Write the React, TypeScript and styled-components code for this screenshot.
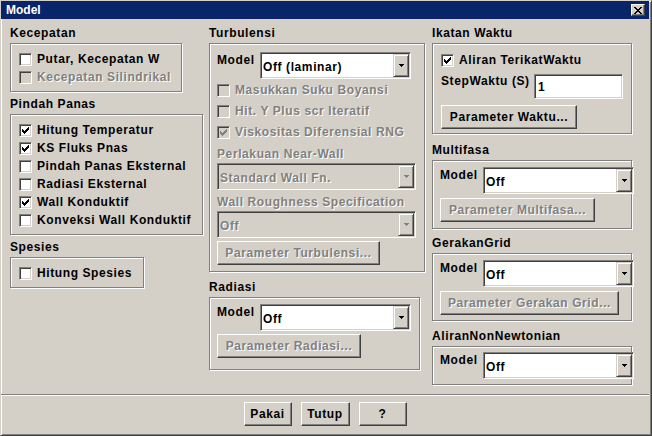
import React from "react";
import styled, { createGlobalStyle } from "styled-components";

const face = "#d4d0c8";
const shadow = "#808080";
const dark = "#404040";
const light = "#ffffff";

const GlobalStyle = createGlobalStyle`
  * { box-sizing: border-box; }
  body { margin: 0; background: ${face}; }
`;

const Window = styled.div`
  width: 652px;
  height: 436px;
  display: flex;
  flex-direction: column;
  background: ${face};
  border: 1px solid;
  border-color: ${face} ${dark} ${dark} ${face};
  box-shadow: inset 1px 1px ${light}, inset -1px -1px ${shadow};
  padding: 0 2px 0 0;
  font-family: "Liberation Sans", Arial, sans-serif;
  font-size: 12px;
  font-weight: bold;
  letter-spacing: 0.6px;
  line-height: 13px;
  color: #000;
`;

const TitleBar = styled.div`
  height: 18px;
  display: flex;
  align-items: center;
  padding-left: 5px;
  background: #0a246a;
  color: ${light};
  letter-spacing: 0;
`;

const CloseButton = styled.div`
  width: 14px;
  height: 12px;
  margin: 0 4px 0 auto;
  display: flex;
  align-items: center;
  justify-content: center;
  background: ${face};
  border: 1px solid;
  border-color: ${light} ${dark} ${dark} ${light};
  box-shadow: inset -1px -1px ${shadow};
`;

const Body = styled.div`
  padding: 8px 0 0 9px;
`;

const Columns = styled.div`
  display: flex;
  align-items: flex-start;
  gap: 6px;
`;

const Column = styled.div<{ $w: number }>`
  width: ${(p) => p.$w}px;
  display: flex;
  flex-direction: column;
`;

const Section = styled.div<{ $mt?: number }>`
  margin-top: ${(p) => p.$mt ?? 0}px;
`;

const Heading = styled.div`
  height: 13px;
  margin-bottom: 3px;
  white-space: nowrap;
`;

const Box = styled.div<{ $w: number; $pad: string }>`
  width: ${(p) => p.$w}px;
  padding: ${(p) => p.$pad};
  border: 1px solid ${shadow};
  box-shadow: inset 1px 1px ${light}, 1px 1px ${light};
`;

const Text = styled.span<{ $disabled?: boolean }>`
  white-space: nowrap;
  color: ${(p) => (p.$disabled ? shadow : "#000")};
  text-shadow: ${(p) => (p.$disabled ? `1px 1px ${light}` : "none")};
`;

const CheckRow = styled.div<{ $h: number }>`
  height: ${(p) => p.$h}px;
  display: flex;
  align-items: center;
  gap: 5px;
`;

const CheckSquare = styled.div<{ $disabled?: boolean }>`
  width: 13px;
  height: 13px;
  flex: none;
  padding: 2px;
  border: 1px solid;
  border-color: ${shadow} ${light} ${light} ${shadow};
  box-shadow: inset 1px 1px ${dark}, inset -1px -1px ${face};
  background: ${(p) => (p.$disabled ? face : light)};
  display: flex;
`;

const CheckList = styled.div<{ $mt?: number }>`
  margin-top: ${(p) => p.$mt ?? 0}px;
`;

const FieldRow = styled.div<{ $mt?: number }>`
  display: flex;
  align-items: flex-start;
  margin-top: ${(p) => p.$mt ?? 0}px;
`;

const FieldLabel = styled.div<{ $w: number; $pt: number }>`
  width: ${(p) => p.$w}px;
  padding-top: ${(p) => p.$pt}px;
  flex: none;
  white-space: nowrap;
`;

const CaptionText = styled(Text)<{ $mt: number }>`
  display: block;
  height: 13px;
  margin-top: ${(p) => p.$mt}px;
`;

const SelectFrame = styled.div<{ $w?: number; $disabled?: boolean; $mt?: number }>`
  width: ${(p) => (p.$w ? `${p.$w}px` : "100%")};
  height: 27px;
  flex: none;
  margin-top: ${(p) => p.$mt ?? 0}px;
  display: flex;
  border: 1px solid;
  border-color: ${shadow} ${light} ${light} ${shadow};
  box-shadow: inset 1px 1px ${dark}, inset -1px -1px ${face};
  background: ${(p) => (p.$disabled ? face : light)};
`;

const SelectValue = styled.div`
  flex: 1;
  display: flex;
  align-items: center;
  padding: 4px 0 0 2px;
  overflow: hidden;
`;

const DropButton = styled.div`
  width: 16px;
  margin: 1px 1px 1px 0;
  display: flex;
  align-items: center;
  justify-content: center;
  background: ${face};
  border: 1px solid;
  border-color: ${face} ${dark} ${dark} ${face};
  box-shadow: inset 1px 1px ${light}, inset -1px -1px ${shadow};
`;

const TextField = styled.div`
  width: 89px;
  height: 25px;
  display: flex;
  align-items: center;
  padding: 1px 0 0 3px;
  border: 1px solid;
  border-color: ${shadow} ${light} ${light} ${shadow};
  box-shadow: inset 1px 1px ${dark}, inset -1px -1px ${face};
  background: ${light};
`;

const Button = styled.div<{ $w: number; $mt?: number }>`
  width: ${(p) => p.$w}px;
  height: 24px;
  margin-top: ${(p) => p.$mt ?? 0}px;
  display: flex;
  align-items: center;
  justify-content: center;
  background: ${face};
  border: 1px solid;
  border-color: ${light} ${dark} ${dark} ${light};
  box-shadow: inset -1px -1px ${shadow};
`;

const Separator = styled.div`
  margin-top: 9px;
  border-top: 1px solid ${shadow};
  border-bottom: 1px solid ${light};
`;

const Footer = styled.div`
  display: flex;
  justify-content: center;
  gap: 9px;
  padding-top: 6px;
`;

const CheckMark = ({ color }: { color: string }) => (
  <svg width="7" height="7" viewBox="0 0 7 7" shapeRendering="crispEdges">
    {[2, 3, 4, 3, 2, 1, 0].map((y, x) => (
      <rect key={x} x={x} y={y} width="1" height="3" fill={color} />
    ))}
  </svg>
);

const Arrow = ({ color }: { color: string }) => (
  <svg width="5" height="3" viewBox="0 0 5 3" shapeRendering="crispEdges">
    <rect x="0" y="0" width="5" height="1" fill={color} />
    <rect x="1" y="1" width="3" height="1" fill={color} />
    <rect x="2" y="2" width="1" height="1" fill={color} />
  </svg>
);

const CloseX = () => (
  <svg width="8" height="7" viewBox="0 0 8 7" shapeRendering="crispEdges">
    {[0, 1, 2, 3, 4, 5, 6].map((i) => (
      <React.Fragment key={i}>
        <rect x={i} y={i} width="2" height="1" fill="#000" />
        <rect x={6 - i} y={i} width="2" height="1" fill="#000" />
      </React.Fragment>
    ))}
  </svg>
);

const Check = ({
  label,
  checked,
  disabled,
  h,
}: {
  label: string;
  checked?: boolean;
  disabled?: boolean;
  h: number;
}) => (
  <CheckRow $h={h}>
    <CheckSquare $disabled={disabled}>
      {checked && <CheckMark color={disabled ? shadow : "#000"} />}
    </CheckSquare>
    <Text $disabled={disabled}>{label}</Text>
  </CheckRow>
);

const Select = ({
  value,
  w,
  disabled,
  mt,
}: {
  value: string;
  w?: number;
  disabled?: boolean;
  mt?: number;
}) => (
  <SelectFrame $w={w} $disabled={disabled} $mt={mt}>
    <SelectValue>
      <Text $disabled={disabled}>{value}</Text>
    </SelectValue>
    <DropButton>
      <Arrow color={disabled ? shadow : "#000"} />
    </DropButton>
  </SelectFrame>
);

const ModelRow = ({ value }: { value: string }) => (
  <FieldRow>
    <FieldLabel $w={43} $pt={2}>
      Model
    </FieldLabel>
    <Select value={value} w={151} />
  </FieldRow>
);

const pindahPanas = [
  { label: "Hitung Temperatur", checked: true },
  { label: "KS Fluks Pnas", checked: true },
  { label: "Pindah Panas Eksternal" },
  { label: "Radiasi Eksternal" },
  { label: "Wall Konduktif", checked: true },
  { label: "Konveksi Wall Konduktif" },
];

const turbulensi = [
  { label: "Masukkan Suku Boyansi" },
  { label: "Hit. Y Plus scr Iteratif" },
  { label: "Viskositas Diferensial RNG", checked: true },
];

export default function App() {
  return (
    <>
      <GlobalStyle />
      <Window>
        <TitleBar>
          Model
          <CloseButton>
            <CloseX />
          </CloseButton>
        </TitleBar>
        <Body>
          <Columns>
            <Column $w={193}>
              <Section>
                <Heading>Kecepatan</Heading>
                <Box $w={172} $pad="6px 8px 5px 8px">
                  <Check h={18} label="Putar, Kecepatan W" />
                  <Check h={18} label="Kecepatan Silindrikal" disabled />
                </Box>
              </Section>
              <Section $mt={6}>
                <Heading>Pindah Panas</Heading>
                <Box $w={193} $pad="6px 8px 5px 8px">
                  {pindahPanas.map((r) => (
                    <Check key={r.label} h={18} label={r.label} checked={r.checked} />
                  ))}
                </Box>
              </Section>
              <Section $mt={6}>
                <Heading>Spesies</Heading>
                <Box $w={134} $pad="6px 8px 5px 8px">
                  <Check h={18} label="Hitung Spesies" />
                </Box>
              </Section>
            </Column>

            <Column $w={217}>
              <Section>
                <Heading>Turbulensi</Heading>
                <Box $w={216} $pad="8px 8px 6px 7px">
                  <ModelRow value="Off (laminar)" />
                  <CheckList $mt={1}>
                    {turbulensi.map((r) => (
                      <Check key={r.label} h={21} label={r.label} checked={r.checked} disabled />
                    ))}
                  </CheckList>
                  <CaptionText $disabled $mt={5}>
                    Perlakuan Near-Wall
                  </CaptionText>
                  <Select value="Standard Wall Fn." disabled mt={2} />
                  <CaptionText $disabled $mt={6}>
                    Wall Roughness Specification
                  </CaptionText>
                  <Select value="Off" disabled mt={2} />
                  <Button $w={163} $mt={3}>
                    <Text $disabled>Parameter Turbulensi...</Text>
                  </Button>
                </Box>
              </Section>
              <Section $mt={9}>
                <Heading>Radiasi</Heading>
                <Box $w={211} $pad="6px 8px 11px 7px">
                  <ModelRow value="Off" />
                  <Button $w={144} $mt={3}>
                    <Text $disabled>Parameter Radiasi...</Text>
                  </Button>
                </Box>
              </Section>
            </Column>

            <Column $w={200}>
              <Section>
                <Heading>Ikatan Waktu</Heading>
                <Box $w={200} $pad="6px 8px 4px 8px">
                  <Check h={21} label="Aliran TerikatWaktu" checked />
                  <FieldRow $mt={3}>
                    <FieldLabel $w={93} $pt={1}>
                      StepWaktu (S)
                    </FieldLabel>
                    <TextField>1</TextField>
                  </FieldRow>
                  <Button $w={136} $mt={6}>
                    Parameter Waktu...
                  </Button>
                </Box>
              </Section>
              <Section $mt={10}>
                <Heading>Multifasa</Heading>
                <Box $w={200} $pad="6px 0 6px 7px">
                  <ModelRow value="Off" />
                  <Button $w={155} $mt={4}>
                    <Text $disabled>Parameter Multifasa...</Text>
                  </Button>
                </Box>
              </Section>
              <Section $mt={8}>
                <Heading>GerakanGrid</Heading>
                <Box $w={200} $pad="6px 0 5px 7px">
                  <ModelRow value="Off" />
                  <Button $w={179} $mt={4}>
                    <Text $disabled>Parameter Gerakan Grid...</Text>
                  </Button>
                </Box>
              </Section>
              <Section $mt={9}>
                <Heading>AliranNonNewtonian</Heading>
                <Box $w={200} $pad="5px 0 5px 7px">
                  <ModelRow value="Off" />
                </Box>
              </Section>
            </Column>
          </Columns>
        </Body>
        <Separator />
        <Footer>
          <Button $w={48}>Pakai</Button>
          <Button $w={49}>Tutup</Button>
          <Button $w={48}>?</Button>
        </Footer>
      </Window>
    </>
  );
}
